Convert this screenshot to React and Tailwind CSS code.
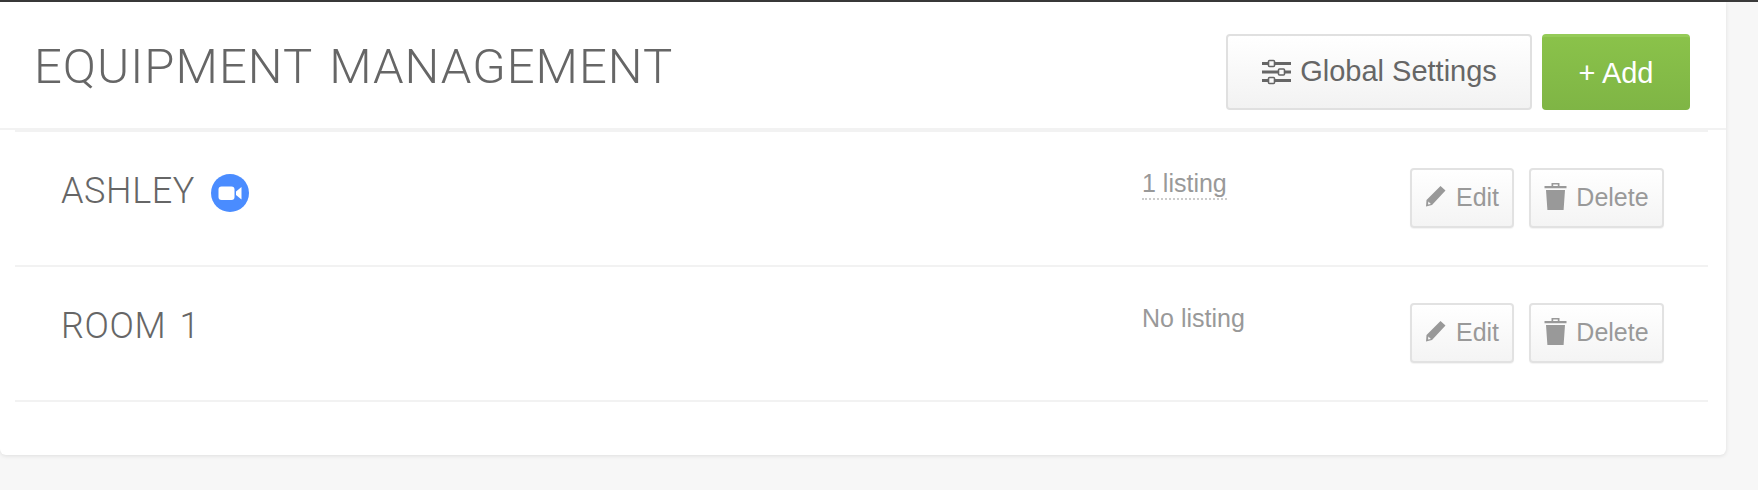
import React from "react";

function Sliders() {
  return (
    <svg width="31" height="26" viewBox="0 0 31 26" fill="none" className="shrink-0">
      <g stroke="#666" strokeWidth="3">
        <path d="M1 4.5H8M14 4.5H30M1 13H18M24 13H30M1 21.5H8M14 21.5H30" />
      </g>
      <g stroke="#666" strokeWidth="1.6" fill="#fafafa">
        <rect x="7.5" y="1.5" width="6" height="6" rx="1" />
        <rect x="17.5" y="10" width="6" height="6" rx="1" />
        <rect x="7.5" y="18.5" width="6" height="6" rx="1" />
      </g>
    </svg>
  );
}

function Pencil() {
  return (
    <svg width="21" height="22" viewBox="0 0 21 22" className="shrink-0 mb-[4px]">
      <path fill="#999" fillRule="evenodd" d="M15.5 1 20.5 5.5 7 20 1 21.5 1.5 15ZM3.4 16.4 3 19.6 5.9 18.9 Z" />
    </svg>
  );
}

function Trash() {
  return (
    <svg width="23" height="27" viewBox="0 0 23 27" className="shrink-0 mb-[4px]">
      <path fill="#999" d="M7.5 0h8v3H22.5v2.2H.5V3H7.5ZM9.2 1.4V3h4.6V1.4ZM2 7h19l-1.4 20H3.4Z" />
    </svg>
  );
}

function ZoomLogo() {
  return (
    <svg width="38" height="38" viewBox="0 0 38 38" className="shrink-0 mt-[8px]">
      <circle cx="19" cy="19" r="19" fill="#4a8cff" />
      <rect x="7.5" y="12.5" width="16" height="13.5" rx="3" fill="#fff" />
      <path d="M25 17.5 30.5 13v12.5L25 21Z" fill="#fff" />
    </svg>
  );
}

function RowButton({ icon, label, width, gap }) {
  return (
    <button
      className={`${width} ${gap} h-[60px] flex items-center justify-center rounded-[4px] border-2 border-[#e2e2e2] bg-gradient-to-b from-white to-[#f4f4f4] text-[25px] text-[#999] shadow-[0_1px_1px_rgba(0,0,0,0.05)]`}
    >
      {icon}
      <span>{label}</span>
    </button>
  );
}

function Row({ name, logo, listing, dotted }) {
  return (
    <div className="h-[135px] flex items-start border-b-2 border-[#f2f2f2] pl-[46px] pr-[44px]">
      <div className="flex-1 flex items-start gap-[16px] pt-[34px] text-[36px] leading-[50px] text-[#666] font-['Roboto'] font-light tracking-[0.6px] [word-spacing:4px]">
        <span>{name}</span>
        {logo && <ZoomLogo />}
      </div>
      <div className="w-[268px] pt-[36px]">
        <span
          className={`inline-block text-[25px] leading-[30px] text-[#999] ${dotted ? "border-b-2 border-dotted border-[#ccc]" : ""}`}
        >
          {listing}
        </span>
      </div>
      <div className="flex gap-[15px] pt-[36px]">
        <RowButton icon={<Pencil />} label="Edit" width="w-[104px]" gap="gap-[10px]" />
        <RowButton icon={<Trash />} label="Delete" width="w-[135px]" gap="gap-[9px]" />
      </div>
    </div>
  );
}

export default function App() {
  return (
    <div className="w-[1758px] h-[490px] overflow-hidden bg-[#f7f7f7] font-['Liberation_Sans',sans-serif]">
      <div className="h-[2px] bg-[#3a3a3a]" />
      <div className="w-[1726px] h-[453px] bg-white rounded-br-[6px] rounded-bl-[6px] shadow-[0_1px_4px_rgba(0,0,0,0.1)]">
        <div className="h-[128px] flex items-center justify-between border-b-2 border-[#f2f2f2] pl-[34px] pr-[36px]">
          <h1 className="text-[49px] leading-[60px] text-[#666] font-['Roboto'] font-light tracking-[1px] pt-[4px] whitespace-pre [word-spacing:4px]">
            EQUIPMENT MANAGEMENT
          </h1>
          <div className="flex gap-[10px] pt-[14px]">
            <button className="w-[306px] h-[76px] flex items-center justify-center gap-[8px] rounded-[4px] border-2 border-[#e0e0e0] bg-gradient-to-b from-white to-[#f2f2f2] text-[29px] text-[#666]">
              <Sliders />
              <span>Global Settings</span>
            </button>
            <button className="w-[148px] h-[76px] flex items-center justify-center rounded-[4px] border-t-[3px] border-[#95cb58] bg-gradient-to-b from-[#8ac24a] to-[#7fb545] text-[29px] text-white">
              + Add
            </button>
          </div>
        </div>
        <div className="ml-[15px] mr-[18px] border-t-2 border-[#f2f2f2]">
          <Row name="ASHLEY" logo listing="1 listing" dotted />
          <Row name="ROOM 1" listing="No listing" />
        </div>
      </div>
    </div>
  );
}
